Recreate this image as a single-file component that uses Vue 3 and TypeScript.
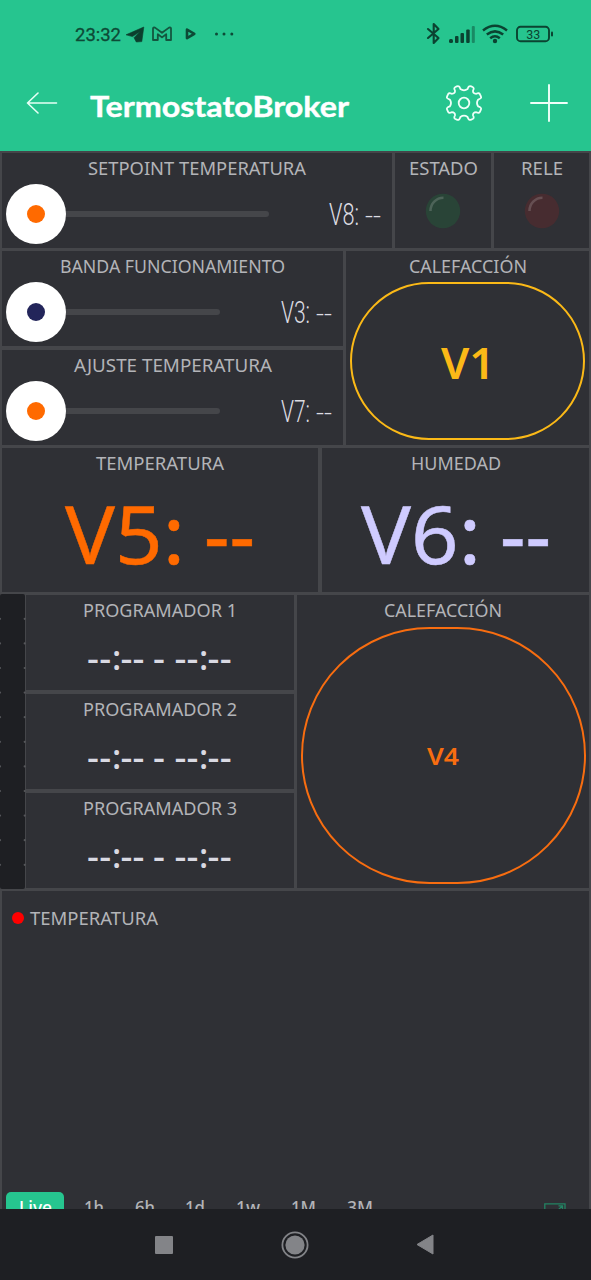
<script setup lang="ts">
import { h, type FunctionalComponent } from 'vue'

interface FitProps {
  text: string
  w: number
  size: number
  cap: number
}

// A single line of text set to an exact width; the box is as tall as its capitals.
const FitText: FunctionalComponent<FitProps> = (p) =>
  h('svg', { width: p.w, height: p.cap, overflow: 'visible' }, [
    h(
      'text',
      { x: 0, y: p.cap, 'font-size': p.size, textLength: p.w, lengthAdjust: 'spacingAndGlyphs', fill: 'currentColor' },
      p.text,
    ),
  ])
FitText.props = ['text', 'w', 'size', 'cap']

interface Slider {
  title: string
  titleWidth: number
  pin: string
  color: string
}

const setpoint: Slider = { title: 'SETPOINT TEMPERATURA', titleWidth: 218, pin: 'V8:', color: '#ff6a00' }
const sliders: Slider[] = [
  { title: 'BANDA FUNCIONAMIENTO', titleWidth: 225, pin: 'V3:', color: '#23255a' },
  { title: 'AJUSTE TEMPERATURA', titleWidth: 198, pin: 'V7:', color: '#ff6a00' },
]
const leds = [
  { title: 'ESTADO', w: 69, tone: 'green' },
  { title: 'RELE', w: 42, tone: 'red' },
]
const readings = [
  { title: 'TEMPERATURA', w: 128, pin: 'V5:', tone: 'orange' },
  { title: 'HUMEDAD', w: 90, pin: 'V6:', tone: 'lilac' },
]
const timers = ['PROGRAMADOR 1', 'PROGRAMADOR 2', 'PROGRAMADOR 3']
const ranges = [
  { text: '1h', w: 20 },
  { text: '6h', w: 20 },
  { text: '1d', w: 20 },
  { text: '1w', w: 24 },
  { text: '1M', w: 25 },
  { text: '3M', w: 26 },
]
const notches = Array.from({ length: 11 }, (_, i) => i)
</script>

<template>
  <div class="screen">
    <header class="top">
      <div class="status">
        <FitText class="clock" text="23:32" :w="46" :size="18.5" :cap="13" />
        <svg class="tray" width="120" height="20" viewBox="0 0 120 20">
          <path d="M2 10.8 19.8 3 17.8 17.6 12.3 18 10 13.7 16 7.5 8.5 12.6Z" fill="#0b3f2e" stroke="#0b3f2e" stroke-width=".6" stroke-linejoin="round" />
          <path d="M29 4.5Q29 3.2 31 3.6L38 8.8 45 3.6Q47 3.2 47 4.5V16H42.2V10.2L38 13.4 33.8 10.2V16H29Z" fill="none" stroke="#14563f" stroke-width="1.8" stroke-linejoin="round" />
          <path d="M63 5.5 70.3 9.8 63 14.2Z" fill="none" stroke="#0d4a36" stroke-width="2.6" stroke-linejoin="round" />
          <g fill="#0d4a36"><circle cx="92.5" cy="10" r="1.5" /><circle cx="100" cy="10" r="1.5" /><circle cx="107.8" cy="10" r="1.5" /></g>
        </svg>
        <svg class="signals" width="128" height="24" viewBox="0 0 128 24" fill="none" stroke="#0b4331">
          <path d="M3 7 13.5 16 8.7 21V2L13.5 7 3 16" stroke-width="2.1" stroke-linejoin="round" stroke-linecap="round" />
          <g stroke="none" fill="#0b4331">
            <rect x="24" y="17" width="4" height="4" rx="1.5" />
            <rect x="30" y="14" width="3.5" height="7" rx="1" />
            <rect x="35.5" y="11" width="3.5" height="10" rx="1" />
            <rect x="41.2" y="7.5" width="3.5" height="13.5" rx="1" />
            <rect x="46.8" y="4" width="3" height="17" rx="1" opacity=".45" />
            <circle cx="70" cy="19" r="2.2" />
            <rect x="126" y="9.5" width="2" height="5" rx="1" />
          </g>
          <path d="M58 8.4Q70 -1 82 8.4M61.8 12.6Q70 6.2 78.2 12.6M65.2 16.2Q70 12.3 74.8 16.2" stroke-width="2.5" />
          <rect x="92" y="4.8" width="32" height="14.4" rx="3.5" stroke-width="1.9" />
          <text x="101.3" y="16.6" font-size="13" textLength="14" lengthAdjust="spacingAndGlyphs" stroke="none" fill="#0b4331">33</text>
        </svg>
      </div>
      <div class="bar">
        <svg class="back" width="32" height="22" viewBox="0 0 32 22">
          <path d="M30.5 11H1.5M12 1 1.5 11 12 21" fill="none" stroke="#e6fff5" stroke-width="1.6" stroke-linecap="round" stroke-linejoin="round" />
        </svg>
        <FitText class="title" text="TermostatoBroker" :w="259" :size="29" :cap="21" />
        <svg class="gear" width="40" height="40" viewBox="-20 -20 40 40" fill="none" stroke="#f0fff9" stroke-width="1.8">
          <circle r="5.3" />
          <path
            d="M-3.6 -13.9Q-4.5 -17.8 -7.2 -16.6L-8.6 -16Q-10.6 -15 -9 -12.4Q-8.6 -9.3 -12.3 -9.2Q-15.2 -10.6 -16 -8.6L-17 -6.4Q-17.8 -4.6 -14.2 -3.4Q-11.8 0 -14.2 3.4Q-17.8 4.6 -17 6.4L-16 8.6Q-15.2 10.6 -12.3 9.2Q-8.6 9.3 -9 12.4Q-10.6 15 -8.6 16L-7.2 16.6Q-4.5 17.8 -3.6 13.9Q0 11.4 3.6 13.9Q4.5 17.8 7.2 16.6L8.6 16Q10.6 15 9 12.4Q8.6 9.3 12.3 9.2Q15.2 10.6 16 8.6L17 6.4Q17.8 4.6 14.2 3.4Q11.8 0 14.2 -3.4Q17.8 -4.6 17 -6.4L16 -8.6Q15.2 -10.6 12.3 -9.2Q8.6 -9.3 9 -12.4Q10.6 -15 8.6 -16L7.2 -16.6Q4.5 -17.8 3.6 -13.9Q0 -11.4 -3.6 -13.9Z"
            stroke-linejoin="round"
          />
        </svg>
        <svg class="plus" width="38" height="38" viewBox="0 0 38 38">
          <path d="M19 1V37M1 19H37" stroke="#f0fff9" stroke-width="1.9" stroke-linecap="round" />
        </svg>
      </div>
    </header>

    <main class="board">
      <section class="row row-setpoint">
        <div class="cell">
          <FitText class="label" :text="setpoint.title" :w="setpoint.titleWidth" :size="17.2" :cap="12" />
          <div class="slider">
            <div class="thumb"><i class="dot" :style="{ background: setpoint.color }" /></div>
            <div class="track" />
            <div class="value">
              <FitText :text="setpoint.pin" :w="30" :size="32" :cap="22.5" />
              <FitText class="dashes" text="--" :w="16" :size="26" :cap="18" />
            </div>
          </div>
        </div>
        <div v-for="led in leds" :key="led.title" class="cell">
          <FitText class="label" :text="led.title" :w="led.w" :size="17.2" :cap="12" />
          <svg class="led" :class="led.tone" width="36" height="36" viewBox="0 0 36 36">
            <circle cx="18" cy="18" r="17.2" fill="currentColor" />
            <path d="M5.5 18A13 13 0 0 1 18.5 4.8" fill="none" stroke="#fff" stroke-opacity=".17" stroke-width="2.6" />
          </svg>
        </div>
      </section>

      <section class="row row-controls">
        <div class="stack">
          <div v-for="s in sliders" :key="s.pin" class="cell">
            <FitText class="label" :text="s.title" :w="s.titleWidth" :size="17.2" :cap="12" />
            <div class="slider">
              <div class="thumb"><i class="dot" :style="{ background: s.color }" /></div>
              <div class="track" />
              <div class="value">
                <FitText :text="s.pin" :w="29" :size="32" :cap="22.5" />
                <FitText class="dashes" text="--" :w="16" :size="26" :cap="18" />
              </div>
            </div>
          </div>
        </div>
        <div class="cell">
          <FitText class="label" text="CALEFACCIÓN" :w="118" :size="17.2" :cap="12" />
          <div class="pill amber"><FitText class="pin" text="V1" :w="54" :size="43.5" :cap="31" /></div>
        </div>
      </section>

      <section class="row row-readings">
        <div v-for="r in readings" :key="r.pin" class="cell">
          <FitText class="label" :text="r.title" :w="r.w" :size="17.2" :cap="12" />
          <div class="reading" :class="r.tone">
            <FitText :text="r.pin" :w="120" :size="81" :cap="58" />
            <FitText class="minus" text="--" :w="51" :size="86" :cap="58" />
          </div>
        </div>
      </section>

      <section class="row row-timers">
        <svg class="ruler" width="26" height="295">
          <rect width="25" height="295" rx="2" fill="#1e1f23" />
          <g v-for="n in notches" :key="n" fill="#55565a">
            <circle cx="0" :cy="24.8 + n * 24.6" r="1.1" />
            <circle cx="24.7" :cy="24.8 + n * 24.6" r="1.1" />
          </g>
        </svg>
        <div class="stack">
          <div v-for="t in timers" :key="t" class="cell">
            <FitText class="label" :text="t" :w="154" :size="17.2" :cap="12" />
            <svg class="time" width="146" height="24" overflow="visible">
              <text x="0 12.2 25 33.5 45.6 60 66 80 87.5 99.6 112 120.6 132.7" y="21.5" font-size="37">--<tspan font-size="34" y="20.5">:</tspan><tspan y="21.5">-- - --</tspan><tspan font-size="34" y="20.5">:</tspan><tspan y="21.5">--</tspan></text>
            </svg>
          </div>
        </div>
        <div class="cell">
          <FitText class="label" text="CALEFACCIÓN" :w="118" :size="17.2" :cap="12" />
          <div class="pill wide"><FitText class="pin" text="V4" :w="32" :size="24" :cap="17" /></div>
        </div>
      </section>

      <section class="cell chart">
        <div class="legend">
          <i class="mark" />
          <FitText class="series" text="TEMPERATURA" :w="128" :size="17.2" :cap="12" />
        </div>
        <div class="ranges">
          <div class="live"><FitText text="Live" :w="33" :size="17.5" :cap="12.5" /></div>
          <FitText v-for="r in ranges" :key="r.text" class="range" :text="r.text" :w="r.w" :size="17.5" :cap="12.5" />
          <svg class="expand" width="22" height="16" viewBox="0 0 22 16" fill="none" stroke="#238363" stroke-width="1.3">
            <path d="M.8 16V.8H21V16M14.5 2.8H18.5V6M18.5 2.8 13 8" />
          </svg>
        </div>
      </section>
    </main>

    <nav class="nav">
      <svg width="18" height="18"><rect width="18" height="18" rx="1" fill="#838488" /></svg>
      <svg class="home" width="28" height="28" viewBox="0 0 28 28">
        <circle cx="14" cy="14" r="12.6" fill="none" stroke="#838488" stroke-width="1.8" />
        <circle cx="14" cy="14" r="9.6" fill="#838488" />
      </svg>
      <svg width="18" height="21" viewBox="0 0 18 21"><path d="M17 1V20L1 10.5Z" fill="#838488" stroke="#838488" stroke-linejoin="round" /></svg>
    </nav>
  </div>
</template>

<style>
body {
  margin: 0;
  background: #1e1f23;
}
</style>

<style scoped>
.screen {
  width: 591px;
  height: 1280px;
  display: flex;
  flex-direction: column;
  overflow: hidden;
  background: #1e1f23;
  font-family: 'Noto Sans', 'Open Sans', sans-serif;
}
svg {
  display: block;
  flex: none;
}
.top {
  height: 151px;
  flex: none;
  background: #26c58f;
}
.status {
  height: 68px;
  display: flex;
  align-items: center;
  font-family: Roboto, sans-serif;
}
.clock {
  margin: 1px 0 0 75px;
  color: #0d4a36;
  font-weight: 400;
  stroke: #0d4a36;
  stroke-width: 0.3px;
}
.tray {
  margin-left: 3px;
}
.signals {
  margin-left: 181px;
}
.bar {
  height: 70px;
  display: flex;
  align-items: center;
}
.back {
  margin-left: 26px;
}
.title {
  margin: 6px 0 0 32px;
  color: #fff;
  font-family: Lato, sans-serif;
  font-weight: 700;
  stroke: #fff;
  stroke-width: 0.4px;
}
.gear {
  margin-left: 95px;
}
.plus {
  margin-left: 45.5px;
}
.board {
  height: 1058px;
  flex: none;
  box-sizing: border-box;
  padding: 2px 2px 0;
  display: flex;
  flex-direction: column;
  gap: 3px;
  overflow: hidden;
  background: #45464a;
}
.row {
  display: grid;
  gap: 3px;
  flex: none;
}
.row-setpoint {
  height: 95px;
  grid-template-columns: 390px 96px 95px;
}
.row-controls {
  height: 194px;
  grid-template-columns: 341px 243px;
}
.row-readings {
  height: 144px;
  column-gap: 4px;
  grid-template-columns: 316px 267px;
}
.row-timers {
  height: 293px;
  margin-left: -2px;
  grid-template-columns: 26px 268px 295px;
  column-gap: 0;
}
.row-timers > .cell {
  margin-left: 3px;
}
.ruler {
  margin: -1px 0;
}
.stack {
  display: flex;
  flex-direction: column;
  justify-content: space-between;
}
.stack > .cell {
  height: 95px;
}
.cell {
  display: flex;
  flex-direction: column;
  align-items: center;
  background: #2f3035;
  color: #b3b4b8;
}
.label {
  margin-top: 10px;
}
.slider {
  align-self: stretch;
  height: 60px;
  margin: 9px 11px 0 4px;
  display: flex;
  align-items: center;
}
.thumb {
  z-index: 1;
  width: 60px;
  height: 60px;
  flex: none;
  border-radius: 50%;
  background: #fff;
  display: flex;
  align-items: center;
  justify-content: center;
}
.dot {
  width: 18px;
  height: 18px;
  border-radius: 50%;
}
.track {
  flex: 1;
  height: 6px;
  margin-left: -4px;
  border-radius: 3px;
  background: #45464a;
}
.value {
  width: 112px;
  margin-top: -1.5px;
  display: flex;
  justify-content: flex-end;
  gap: 6.5px;
  color: #dcdce2;
  font-family: Roboto, sans-serif;
  font-weight: 300;
}
.dashes {
  margin-top: 4.5px;
}
.led {
  margin-top: 18px;
}
.green {
  color: #294437;
}
.red {
  color: #472c30;
}
.pill {
  box-sizing: border-box;
  width: 235px;
  height: 158px;
  margin-top: 9px;
  border: 2px solid currentColor;
  border-radius: 79px;
  display: flex;
  align-items: center;
  justify-content: center;
  font-weight: 600;
}
.pin {
  margin-top: 4px;
}
.amber {
  color: #fbb917;
}
.wide {
  width: 285px;
  height: 257px;
  margin-top: 10px;
  border-radius: 128.5px;
  color: #f86d10;
}
.wide .pin {
  margin-top: 2px;
}
.reading {
  display: flex;
  gap: 19px;
  margin-top: 36px;
  font-weight: 400;
  stroke: currentColor;
  stroke-width: 0.5px;
}
.minus {
  margin-top: 2px;
}
.orange {
  color: #ff6a00;
}
.lilac {
  color: #cfcbff;
}
.time {
  margin-top: 32px;
  fill: #d9d9e2;
  font-weight: 500;
}
.chart {
  height: 318px;
  flex: none;
  align-items: stretch;
  justify-content: space-between;
}
.legend {
  display: flex;
  align-items: center;
  gap: 6px;
  margin: 19px 0 0 10px;
}
.series {
  margin-top: 3px;
}
.mark {
  width: 12px;
  height: 12px;
  border-radius: 50%;
  background: #f00;
}
.ranges {
  height: 17px;
  display: flex;
  align-items: flex-start;
  overflow: hidden;
  padding-left: 4px;
  color: #b3b4b8;
  font-weight: 500;
}
.live {
  width: 58px;
  height: 30px;
  margin-right: -11px;
  border-radius: 5px;
  background: #26c58f;
  color: #fff;
  display: flex;
  justify-content: center;
  padding-top: 9px;
  box-sizing: border-box;
}
.range {
  margin: 9px 0 0 30.8px;
}
.expand {
  margin: 11px 0 0 auto;
  margin-right: 23px;
}
.nav {
  flex: 1;
  display: flex;
  align-items: center;
  justify-content: space-between;
  padding: 0 157.5px 0 155px;
}
.home {
  margin-left: 2px;
}
</style>
